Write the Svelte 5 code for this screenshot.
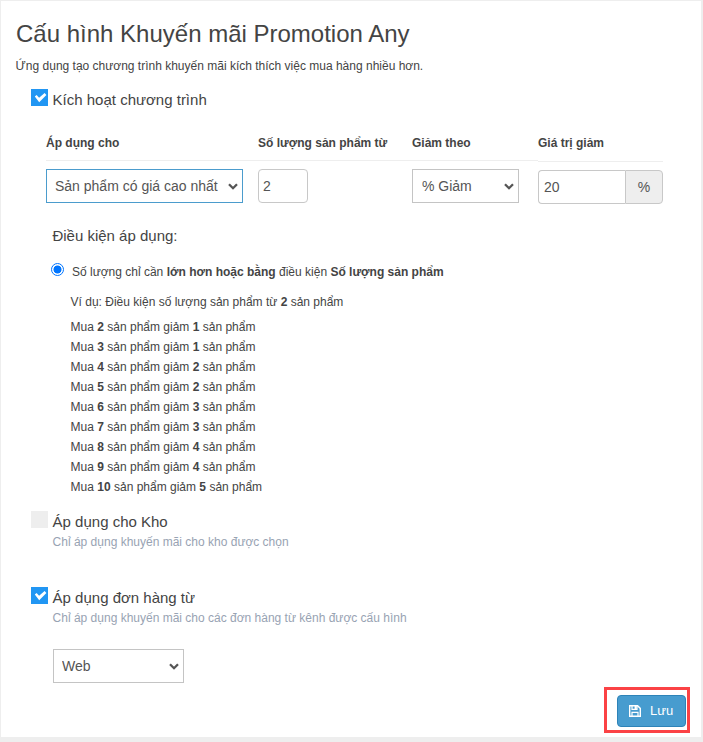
<script>
  const tiers = [[2, 1], [3, 1], [4, 2], [5, 2], [6, 3], [7, 3], [8, 4], [9, 4], [10, 5]];
</script>

{#snippet tick(on)}
  <span class="check" class:on>
    {#if on}
      <svg width="17" height="17" viewBox="0 0 17 17"><path d="M3.8 7.6L5.6 5.9L8.1 8.8L13.6 4L15.4 5.9L8.2 13.2Z" fill="#fff" /></svg>
    {/if}
  </span>
{/snippet}

{#snippet dropdown(label, width, active)}
  <div class="select" style:width="{width}px">
    <select class:active><option>{label}</option></select>
    <svg class="chevron" width="10" height="7" viewBox="0 0 10 7"><path d="M1 1.2 L5 5.2 L9 1.2" fill="none" stroke="#555" stroke-width="2.3" /></svg>
  </div>
{/snippet}

<div class="page">
  <main class="panel">
    <h1><span>Cấu hình Khuyến mãi Promotion Any</span></h1>
    <p class="intro">Ứng dụng tạo chương trình khuyến mãi kích thích việc mua hàng nhiều hơn.</p>

    <div class="option">
      {@render tick(true)}
      <div class="label">Kích hoạt chương trình</div>
    </div>

    <div class="grid">
      <div class="col c1">
        <div class="head">Áp dụng cho</div>
        {@render dropdown('Sản phẩm có giá cao nhất', 197, true)}
      </div>
      <div class="col c2">
        <div class="head">Số lượng sản phẩm từ</div>
        <input class="qty" value="2" />
      </div>
      <div class="col c3">
        <div class="head">Giảm theo</div>
        {@render dropdown('% Giảm', 107, false)}
      </div>
      <div class="col c4">
        <div class="head">Giá trị giảm</div>
        <div class="group"><input value="20" /><span>%</span></div>
      </div>
    </div>

    <div class="label conditions">Điều kiện áp dụng:</div>
    <label class="radio">
      <span class="dot"></span>
      <span>Số lượng chỉ cần <b>lớn hơn hoặc bằng</b> điều kiện <b>Số lượng sản phẩm</b></span>
    </label>
    <div class="example">
      <p>Ví dụ: Điều kiện số lượng sản phẩm từ <b>2</b> sản phẩm</p>
      {#each tiers as [buy, off]}
        <div>Mua <b>{buy}</b> sản phẩm giảm <b>{off}</b> sản phẩm</div>
      {/each}
    </div>

    <div class="option store">
      {@render tick(false)}
      <div>
        <div class="label">Áp dụng cho Kho</div>
        <div class="hint">Chỉ áp dụng khuyến mãi cho kho được chọn</div>
      </div>
    </div>
    <div class="option source">
      {@render tick(true)}
      <div>
        <div class="label">Áp dụng đơn hàng từ</div>
        <div class="hint">Chỉ áp dụng khuyến mãi cho các đơn hàng từ kênh được cấu hình</div>
      </div>
    </div>
    <div class="channel">{@render dropdown('Web', 131, false)}</div>

    <div class="highlight">
      <button>
        <svg width="12" height="12" viewBox="0 0 12 12">
          <path d="M.7 .7H8.6L11.3 3.4V11.3H.7Z" fill="none" stroke="#fff" stroke-width="1.4" />
          <path d="M3 .6V4.4H8V.6M3 11.4V7.4H9V11.4" fill="none" stroke="#fff" stroke-width="1.2" />
          <path d="M5.6 1H7.6V4H5.6Z" fill="#fff" />
        </svg>
        <span>Lưu</span>
      </button>
    </div>
  </main>
</div>

<style>
  .page {
    box-sizing: border-box;
    width: 703px;
    height: 742px;
    padding: 1px 2px 5px 1px;
    background: #eee;
    font: 12px/20px "Liberation Sans", Arial, sans-serif;
    color: #444;
    overflow: hidden;
  }
  .page * { box-sizing: border-box; }
  .panel {
    display: flex;
    flex-direction: column;
    height: 736px;
    padding: 18px 11px 4px 15px;
    background: #fff;
    white-space: nowrap;
  }
  h1 { margin: 0; font-size: 24px; line-height: 30px; font-weight: 400; }
  .intro { margin: 7px 0 0 -0.4px; }
  .option { display: flex; margin: 13px 0 0 15px; gap: 4.6px; }
  .check { flex: none; width: 17px; height: 17px; background: #eee; }
  .check.on { background: #2196f3; }
  .check svg { display: block; }
  .label { font-size: 15px; line-height: 20px; margin-top: 1px; }
  .hint { color: #98a3b3; }
  .grid { display: flex; margin: 23px 0 0 30px; height: 72px; }
  .c1 { width: 212px; }
  .c2 { width: 154px; }
  .c3 { width: 126px; }
  .c4 { width: 125px; }
  .head { height: 28px; border-bottom: 1px solid #eee; margin-bottom: 8px; font-weight: 700; }
  .c4 .head { height: 29px; }
  .select { position: relative; height: 34px; }
  select {
    appearance: none;
    width: 100%;
    height: 34px;
    padding: 0 8px;
    border: 1px solid #c4c4c4;
    border-radius: 0;
    background: #fff;
    color: #555;
    font: 14px "Liberation Sans", Arial, sans-serif;
  }
  .c3 select { padding-left: 9px; }
  select.active { border-color: #4b9ccd; }
  .chevron { position: absolute; right: 5px; top: 14px; }
  input {
    display: block;
    height: 34px;
    padding: 0 5px;
    border: 1px solid #c8c8c8;
    border-radius: 4px;
    background: #fff;
    color: #555;
    font: 14px "Liberation Sans", Arial, sans-serif;
  }
  .qty { width: 50px; padding-left: 4px; }
  .group { display: flex; }
  .group input { width: 87px; border-radius: 4px 0 0 4px; border-right: 0; }
  .group span {
    width: 38px;
    height: 34px;
    border: 1px solid #c8c8c8;
    border-radius: 0 4px 4px 0;
    background: #eee;
    color: #555;
    font-size: 14px;
    line-height: 32px;
    text-align: center;
  }
  .conditions { margin: 22px 0 0 36.4px; }
  .radio { display: flex; margin: 16px 0 0 35px; gap: 8px; }
  .dot {
    width: 13px;
    height: 13px;
    margin-top: 1px;
    border: 1px solid #0075ff;
    border-radius: 50%;
    background: radial-gradient(circle, #0075ff 3.6px, #fff 4.4px);
  }
  .example { margin: 10px 0 0 54.6px; }
  .example p { margin: 0 0 5px; }
  .store { margin-top: 14px; }
  .source { margin-top: 35px; }
  .channel { margin: 21px 0 0 37px; }
  .highlight {
    display: flex;
    align-self: flex-end;
    width: 86px;
    height: 46px;
    margin-top: 4px;
    padding: 5px 1px 3px 10px;
    border: 3px solid #fb4245;
  }
  button {
    display: flex;
    align-items: center;
    width: 69px;
    height: 32px;
    padding: 0 0 1px 11px;
    gap: 9px;
    border: 1px solid #2d83b8;
    border-radius: 4px;
    background: #479ccf;
    color: #fff;
    font: 13px "Liberation Sans", Arial, sans-serif;
  }
</style>
